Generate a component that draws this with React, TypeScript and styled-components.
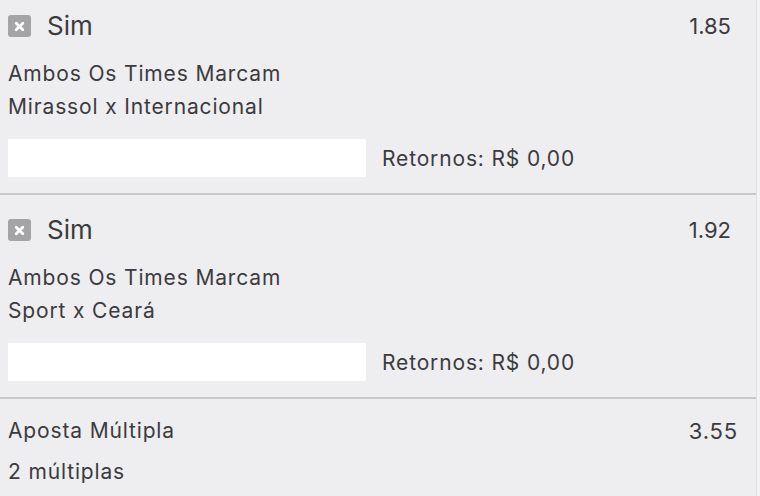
import React from "react";
import styled, { createGlobalStyle } from "styled-components";

const Global = createGlobalStyle`
  html, body { margin: 0; padding: 0; background: #f3f2f4; }
  body { font-family: Inter, "Noto Sans", sans-serif; color: #3b3b3e; }
`;

const Panel = styled.div`
  width: 757px;
  height: 496px;
  background: #eeedf0;
  border-right: 1px solid #e2e1e4;
  box-sizing: border-box;
  overflow: hidden;
`;

const Section = styled.section<{ $first?: boolean }>`
  padding: ${(p) => (p.$first ? "10px" : "19px")} 25px 16px 8px;
  border-bottom: 2px solid #c7c6c9;
`;

const HeaderRow = styled.div`
  display: flex;
  align-items: center;
  height: 32px;
`;

const RemoveIcon = styled.span`
  width: 23px;
  height: 22px;
  border-radius: 3px;
  background: #a4a3a6;
  display: flex;
  align-items: center;
  justify-content: center;
  flex: none;
  margin-right: 16px;
`;

const Selection = styled.span`
  font-size: 26px;
  line-height: 32px;
  flex: 1;
`;

const Odds = styled.span`
  font-size: 22px;
  line-height: 32px;
`;

const BodyText = styled.div`
  font-size: 21px;
  letter-spacing: 0.85px;
  line-height: 33px;
`;

const Info = styled(BodyText)`
  margin-top: 15px;
`;

const StakeRow = styled.div`
  display: flex;
  align-items: center;
  margin-top: 16px;
`;

const StakeInput = styled.div`
  width: 358px;
  height: 38px;
  background: #ffffff;
`;

const Returns = styled.span`
  margin-left: 16px;
  font-size: 21px;
  letter-spacing: 0.85px;
`;

const Summary = styled.div`
  padding: 15px 18px 0 8px;
`;

const SummaryRow = styled(BodyText)`
  display: flex;
  justify-content: space-between;
  align-items: center;
`;

const SubRow = styled(BodyText)`
  margin-top: 8px;
`;

const XMark = () => (
  <svg width="11" height="11" viewBox="0 0 11 11">
    <path d="M2.2 2.2 L8.8 8.8 M8.8 2.2 L2.2 8.8" stroke="#ffffff" strokeWidth="2.8" strokeLinecap="round" />
  </svg>
);

type Bet = { odds: string; match: string };

const bets: Bet[] = [
  { odds: "1.85", match: "Mirassol x Internacional" },
  { odds: "1.92", match: "Sport x Ceará" },
];

export default function App() {
  return (
    <>
      <Global />
      <Panel>
        {bets.map((b, i) => (
          <Section key={b.match} $first={i === 0}>
            <HeaderRow>
              <RemoveIcon>
                <XMark />
              </RemoveIcon>
              <Selection>Sim</Selection>
              <Odds>{b.odds}</Odds>
            </HeaderRow>
            <Info>
              <div>Ambos Os Times Marcam</div>
              <div>{b.match}</div>
            </Info>
            <StakeRow>
              <StakeInput />
              <Returns>Retornos: R$ 0,00</Returns>
            </StakeRow>
          </Section>
        ))}
        <Summary>
          <SummaryRow>
            <span>Aposta Múltipla</span>
            <Odds>3.55</Odds>
          </SummaryRow>
          <SubRow>2 múltiplas</SubRow>
        </Summary>
      </Panel>
    </>
  );
}
